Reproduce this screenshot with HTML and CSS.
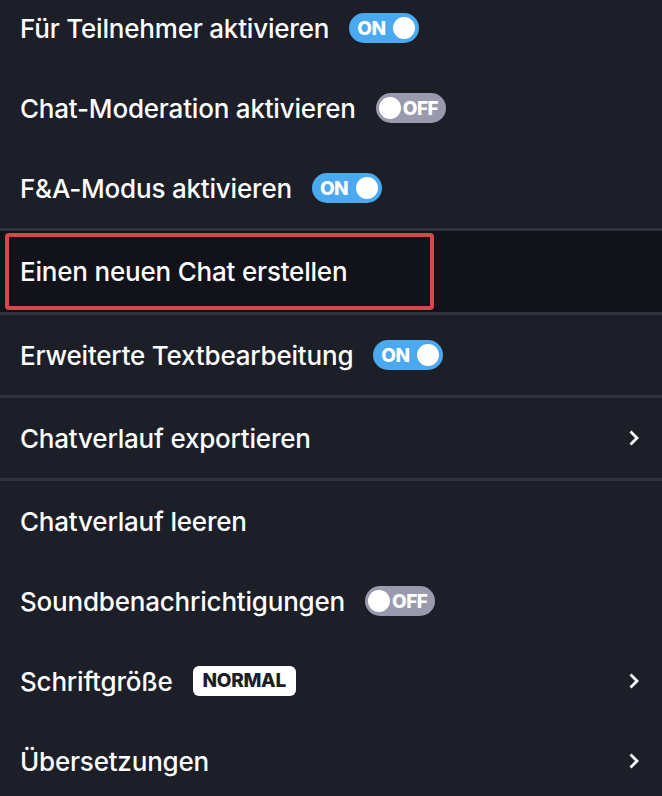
FILE: index.html
```html
<!DOCTYPE html>
<html lang="de">
<head>
    <meta charset="UTF-8">
    <meta name="viewport" content="width=device-width, initial-scale=1.0">
    <title>Chat-Einstellungen</title>
    <link rel="stylesheet" href="styles.css">
</head>
<body>
    <div class="menu">
        <div class="item first">
            <span class="label">Für Teilnehmer aktivieren</span>
            <span class="toggle on">ON<span class="knob"></span></span>
        </div>
        <div class="item">
            <span class="label">Chat-Moderation aktivieren</span>
            <span class="toggle off"><span class="knob"></span>OFF</span>
        </div>
        <div class="item">
            <span class="label">F&amp;A-Modus aktivieren</span>
            <span class="toggle on">ON<span class="knob"></span></span>
        </div>
        <div class="divider"></div>
        <div class="item active">
            <span class="highlight"></span>
            <span class="label">Einen neuen Chat erstellen</span>
        </div>
        <div class="divider"></div>
        <div class="item">
            <span class="label">Erweiterte Textbearbeitung</span>
            <span class="toggle on">ON<span class="knob"></span></span>
        </div>
        <div class="divider"></div>
        <div class="item">
            <span class="label">Chatverlauf exportieren</span>
            <svg class="chevron" width="12" height="16" viewBox="0 0 12 16"><path d="M2.5 1.5 L9 8 L2.5 14.5" fill="none" stroke="#fff" stroke-width="2.8"/></svg>
        </div>
        <div class="divider"></div>
        <div class="item">
            <span class="label">Chatverlauf leeren</span>
        </div>
        <div class="item">
            <span class="label">Soundbenachrichtigungen</span>
            <span class="toggle off"><span class="knob"></span>OFF</span>
        </div>
        <div class="item">
            <span class="label">Schriftgröße</span>
            <span class="badge">NORMAL</span>
            <svg class="chevron" width="12" height="16" viewBox="0 0 12 16"><path d="M2.5 1.5 L9 8 L2.5 14.5" fill="none" stroke="#fff" stroke-width="2.8"/></svg>
        </div>
        <div class="item">
            <span class="label">Übersetzungen</span>
            <svg class="chevron" width="12" height="16" viewBox="0 0 12 16"><path d="M2.5 1.5 L9 8 L2.5 14.5" fill="none" stroke="#fff" stroke-width="2.8"/></svg>
        </div>
    </div>
</body>
</html>
```
FILE: styles.css
```css
body {
    margin: 0;
    background-color: #1c1e28;
    font-family: Inter, "Noto Sans", sans-serif;
    color: #fff;
    overflow: hidden;
}
.menu {
    display: flex;
    flex-direction: column;
    margin-top: -12px;
}
.item {
    position: relative;
    display: flex;
    align-items: center;
    gap: 20px;
    height: 80px;
    padding: 0 20px;
    font-size: 26px;
    font-weight: 500;
    letter-spacing: -0.2px;
}
.item.active {
    height: 81px;
    background-color: #11121a;
}
.highlight {
    position: absolute;
    left: 5px;
    top: 2px;
    width: 421px;
    height: 69px;
    border: 4px solid #d9464c;
    border-radius: 4px;
}
.label {
    position: relative;
}
.divider {
    height: 3px;
    background-color: #30323d;
}
.toggle {
    display: flex;
    align-items: center;
    box-sizing: border-box;
    height: 30px;
    width: 70px;
    border-radius: 15px;
    font-size: 19px;
    font-weight: 800;
    letter-spacing: -0.5px;
}
.toggle.on {
    background-color: #4aa9ef;
    padding: 0 4px 0 8px;
    justify-content: space-between;
}
.toggle.off {
    background-color: #9a9aae;
    padding: 0 4px 0 3px;
    gap: 2px;
}
.knob {
    flex-shrink: 0;
    width: 22px;
    height: 22px;
    border-radius: 50%;
    background-color: #fff;
}
.badge {
    background-color: #fff;
    color: #1c1e28;
    font-size: 19px;
    font-weight: 800;
    letter-spacing: -0.3px;
    padding: 0 10px;
    height: 30px;
    line-height: 30px;
    border-radius: 6px;
}
.chevron {
    margin-left: auto;
    margin-right: 2px;
}
```
